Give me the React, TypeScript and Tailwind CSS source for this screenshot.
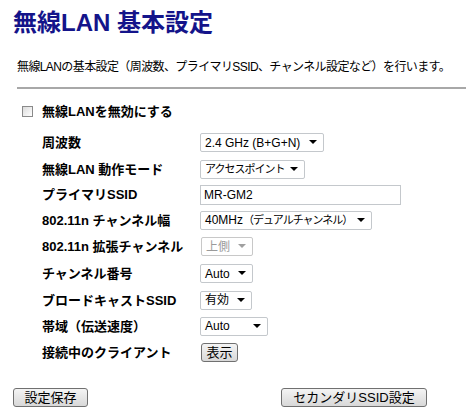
import React from "react";

const font = { fontFamily: '"Liberation Sans", "Noto Sans CJK JP", sans-serif' };

function Arrow({ disabled }: { disabled?: boolean }) {
  return (
    <svg width="8" height="5" viewBox="0 0 8 5" className="shrink-0">
      <polygon points="0,0 8,0 4,4" fill={disabled ? "#a0a0a0" : "#000"} />
    </svg>
  );
}

function Select({ text, w, disabled }: { text: React.ReactNode; w: string; disabled?: boolean }) {
  return (
    <div
      className={`${w} h-[19px] flex items-center justify-between pl-[4px] pr-[6px] bg-white border rounded-[2px] leading-none ${
        disabled ? "border-[#c8c8c8] text-[#9a9a9a]" : "border-[#c4c8cc] text-black"
      }`}
    >
      <span className="whitespace-nowrap text-[12px]">{text}</span>
      <Arrow disabled={disabled} />
    </div>
  );
}

function Jp({ children }: { children: React.ReactNode }) {
  return <span className="text-[11px] tracking-[-1px]">{children}</span>;
}

function Btn({ children, w }: { children: React.ReactNode; w: string }) {
  return (
    <div
      className={`${w} h-[19px] flex items-center justify-center border border-[#707070] rounded-[3px] bg-gradient-to-b from-[#f4f4f4] to-[#d8d8d8] text-[13px] leading-none text-black`}
    >
      {children}
    </div>
  );
}

function Row({ label, h, children }: { label: string; h: string; children: React.ReactNode }) {
  return (
    <div className={`flex items-center ${h}`}>
      <div className="w-[158px] pl-[42px] box-content font-bold text-[13px] leading-none whitespace-nowrap">{label}</div>
      <div className="flex items-center">{children}</div>
    </div>
  );
}

export default function App() {
  return (
    <div className="w-[466px] h-[420px] bg-white text-black overflow-hidden" style={font}>
      <h1 className="pl-[13px] pt-[9px] h-[38px] text-[24px] font-bold leading-[28px] text-[#14148a] whitespace-nowrap">
        無線LAN 基本設定
      </h1>
      <p className="ml-[17px] mt-[22px] text-[12px] leading-[14px] tracking-[-0.6px] whitespace-nowrap">
        無線LANの基本設定（周波数、プライマリSSID、チャンネル設定など）を行います。
      </p>
      <div className="ml-[17px] mt-[13px] h-[2px] bg-[#a8a8a8]" />
      <div className="flex items-center h-[12px] mt-[16px]">
        <div className="ml-[22px] w-[11px] h-[11px] border border-[#8a8a8a] bg-gradient-to-br from-[#dcdcdc] to-[#ffffff]" />
        <span className="ml-[9px] font-bold text-[13px] leading-none whitespace-nowrap">無線LANを無効にする</span>
      </div>
      <div className="mt-[12px]">
        <Row label="周波数" h="h-[27px]">
          <Select text="2.4 GHz (B+G+N)" w="w-[124px]" />
        </Row>
        <Row label="無線LAN 動作モード" h="h-[26px]">
          <Select text={<Jp>アクセスポイント</Jp>} w="w-[105px]" />
        </Row>
        <Row label="プライマリSSID" h="h-[25px]">
          <div className="w-[201px] h-[20px] flex items-center pl-[3px] bg-white border border-[#c4c8cc] text-[12px] leading-none">
            MR-GM2
          </div>
        </Row>
        <Row label="802.11n チャンネル幅" h="h-[26px]">
          <Select
            text={
              <>
                40MHz<Jp>（デュアルチャンネル）</Jp>
              </>
            }
            w="w-[172px]"
          />
        </Row>
        <Row label="802.11n 拡張チャンネル" h="h-[27px]">
          <div className="ml-[1px]">
            <Select text="上側" w="w-[52px]" disabled />
          </div>
        </Row>
        <Row label="チャンネル番号" h="h-[27px]">
          <Select text="Auto" w="w-[53px]" />
        </Row>
        <Row label="ブロードキャストSSID" h="h-[26px]">
          <Select text="有効" w="w-[52px]" />
        </Row>
        <Row label="帯域（伝送速度）" h="h-[26px]">
          <Select text="Auto" w="w-[68px]" />
        </Row>
        <Row label="接続中のクライアント" h="h-[27px]">
          <div className="ml-[1px]">
            <Btn w="w-[37px]">表示</Btn>
          </div>
        </Row>
      </div>
      <div className="flex justify-between pl-[13px] pr-[39px] mt-[22px]">
        <Btn w="w-[75px]">設定保存</Btn>
        <Btn w="w-[146px]">セカンダリSSID設定</Btn>
      </div>
    </div>
  );
}
